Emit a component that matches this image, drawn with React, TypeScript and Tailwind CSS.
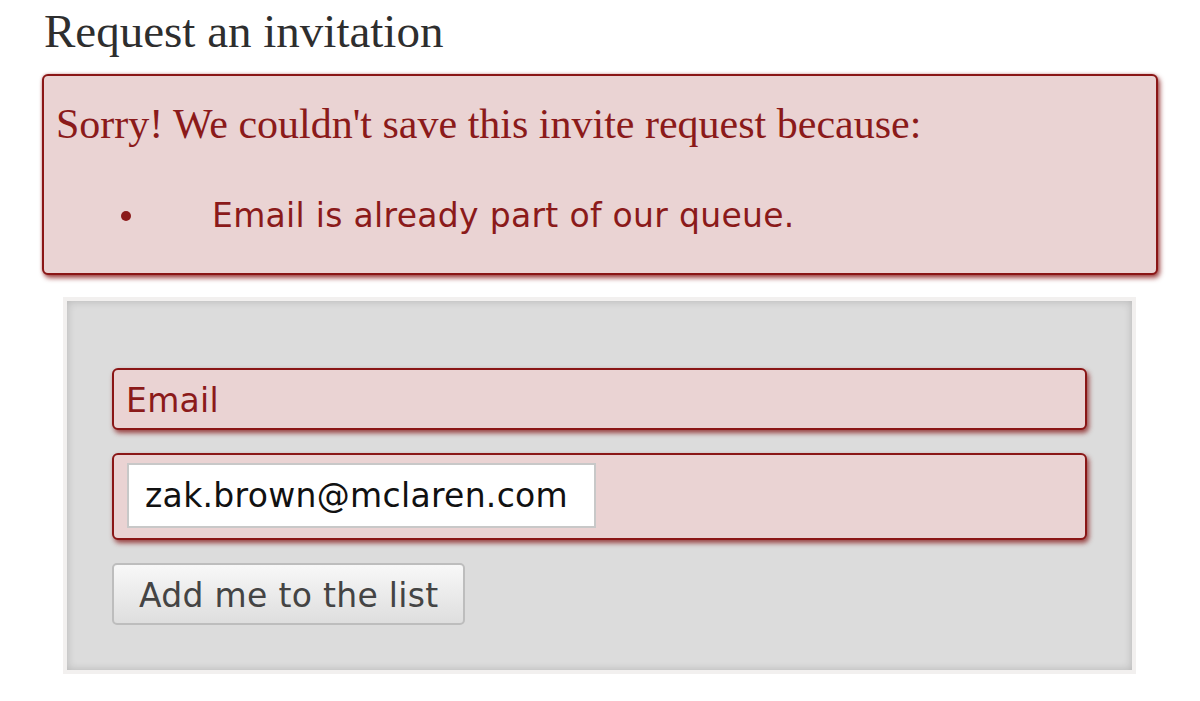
export default function App() {
  return (
    <div className="min-h-[701px] bg-white pl-[42px] pt-[4px]">
      <h1 className="pl-[2px] font-['Liberation_Serif',serif] text-[47px] leading-[54px] text-[#2e2e2e]">
        Request an invitation
      </h1>

      {/* error summary */}
      <div className="mt-[16px] w-[1116px] rounded-[6px] border-2 border-[#8a1616] bg-[#ead3d3] pt-[24px] pb-[37px] pl-[12px] shadow-[2px_3px_5px_rgba(130,15,15,0.75),0_0_3px_rgba(140,20,20,0.35)]">
        <p className="font-['Liberation_Serif',serif] text-[42px] leading-[48px] text-[#8b1a1a]">
          Sorry! We couldn't save this invite request because:
        </p>
        <ul className="mt-[48px] font-['DejaVu_Sans',Verdana,sans-serif] text-[33px] leading-[40px] tracking-[0.3px] text-[#8b1a1a]">
          <li className="flex items-center">
            <span className="ml-[65px] h-[10px] w-[10px] rounded-full bg-[#8b1a1a]" />
            <span className="ml-[81px]">Email is already part of our queue.</span>
          </li>
        </ul>
      </div>

      {/* form */}
      <div className="ml-[21px] mt-[22px] w-[1073px] border-4 border-[#f2f0ef]">
        <div className="bg-[#dcdcdc] px-[45px] pt-[67px] pb-[45px] shadow-[inset_0_0_8px_rgba(0,0,0,0.18)] font-['DejaVu_Sans',Verdana,sans-serif] text-[33px] leading-[40px] tracking-[0.3px]">
          <div className="rounded-[6px] border-2 border-[#8a1616] bg-[#ead3d3] pl-[12px] pt-[11px] pb-[7px] text-[#8b1a1a] shadow-[2px_3px_5px_rgba(130,15,15,0.75)]">
            Email
          </div>
          <div className="mt-[23px] rounded-[6px] border-2 border-[#8a1616] bg-[#ead3d3] pl-[13px] pt-[8px] pb-[10px] shadow-[2px_3px_5px_rgba(130,15,15,0.75)]">
            <input
              readOnly
              defaultValue="zak.brown@mclaren.com"
              className="block h-[65px] w-[469px] border-2 border-[#c8c8c8] bg-white pl-[16px] font-['DejaVu_Sans',Verdana,sans-serif] text-[33px] tracking-[0.3px] text-[#111111] outline-none"
            />
          </div>
          <button className="mt-[23px] block rounded-[5px] border-2 border-[#bdbdbd] bg-gradient-to-b from-[#f8f8f8] to-[#dedede] px-[25px] pt-[11px] pb-[7px] text-[#444444]">
            Add me to the list
          </button>
        </div>
      </div>
    </div>
  );
}
